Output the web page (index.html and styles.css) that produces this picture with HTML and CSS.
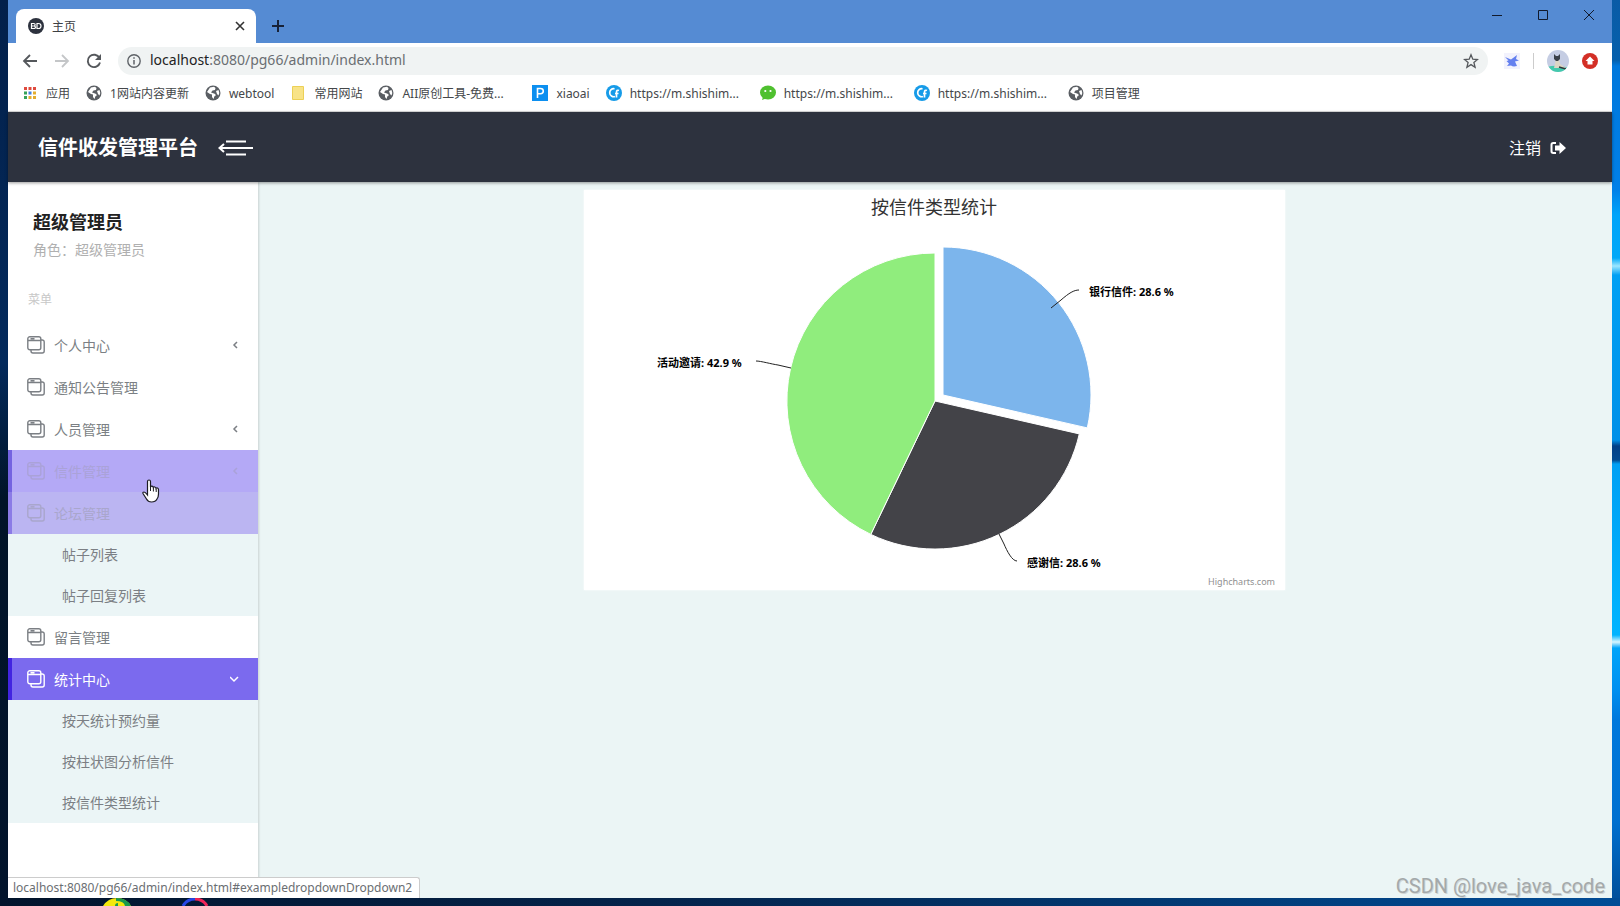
FILE: index.html
```html
<!DOCTYPE html>
<html lang="zh-CN">
<head>
<meta charset="utf-8">
<title>主页</title>
<link rel="stylesheet" href="styles.css">
</head>
<body>
<svg class="defs" aria-hidden="true">
  <symbol id="globe" viewBox="0 0 16 16"><circle cx="8" cy="8" r="7.500" fill="#5a5e63"/><path d="M2 7l3 2 2 .5V12l1.500 2c1-1.200 0-2.500 1.500-3s.5-2-1-2.500L6 7.500l1.500-2L10 5l.5-2L9 1.800 5 2.500zM11 6l2.500-1 .8 3-.8 2.500L12 9z" fill="#fff"/></symbol>
  <symbol id="window" viewBox="0 0 18 18"><g fill="none" stroke="currentColor" stroke-width="1.400"><rect x=".8" y=".8" width="13" height="13" rx="2"/><path d="M1 4.500h13M3.500 2.700h4M14 4h1.200a2 2 0 0 1 2 2v9a2 2 0 0 1-2 2H6a2 2 0 0 1-2-2v-1"/></g></symbol>
  <symbol id="cf" viewBox="0 0 16 16"><circle cx="8" cy="8" r="8" fill="#169be8"/><path d="M8.500 3.800a4 4 0 1 0 .5 7.700M13 5.500q-2.500-1-2.500 2v5M9 8.500h3.500" fill="none" stroke="#fff" stroke-width="1.700"/></symbol>
</svg>
<div class="window">
  <div class="tabstrip">
    <div class="tab">
      <svg class="i16" viewBox="0 0 16 16"><circle cx="8" cy="8" r="8" fill="#2d323e"/><path d="M3.500 5.500h2.200q1.500 0 1.500 1.200T5.700 8q1.800 0 1.800 1.300t-1.800 1.200H3.500zM3.500 8h2M9 5.500h1.500q2.500 0 2.500 2.500t-2.500 2.500H9z" fill="none" stroke="#fff" stroke-width="1.200"/></svg>
      <span class="tab-title">主页</span>
      <button class="plain" aria-label="关闭标签页"><svg class="i10" viewBox="0 0 10 10"><path d="M1 1l8 8M9 1L1 9" stroke="#333" stroke-width="1.600"/></svg></button>
    </div>
    <button class="plain newtab" aria-label="新标签页"><svg class="i12" viewBox="0 0 12 12"><path d="M6 0v12M0 6h12" stroke="#172238" stroke-width="2"/></svg></button>
    <div class="winctl">
      <button class="plain" aria-label="最小化"><svg class="i12" viewBox="0 0 12 12"><path d="M1 6.500h10" stroke="#111a2c"/></svg></button>
      <button class="plain" aria-label="最大化"><svg class="i12" viewBox="0 0 12 12"><path d="M1.500 1.500h9v9h-9z" fill="none" stroke="#111a2c"/></svg></button>
      <button class="plain" aria-label="关闭"><svg class="i12" viewBox="0 0 12 12"><path d="M1 1l10 10M11 1L1 11" stroke="#111a2c"/></svg></button>
    </div>
  </div>
  <div class="toolbar">
    <button class="plain" aria-label="后退"><svg class="i16" viewBox="0 0 16 16"><path d="M15 8H2M8 2L2 8l6 6" fill="none" stroke="#55585c" stroke-width="1.800"/></svg></button>
    <button class="plain" aria-label="前进"><svg class="i16" viewBox="0 0 16 16"><path d="M1 8h13M8 2l6 6-6 6" fill="none" stroke="#c4c6c8" stroke-width="1.800"/></svg></button>
    <button class="plain" aria-label="重新加载"><svg class="i16" viewBox="0 0 16 16"><path d="M13.500 5A6.200 6.200 0 1 0 14 9.500" fill="none" stroke="#55585c" stroke-width="1.900"/><path d="M15 1v6H9z" fill="#55585c"/></svg></button>
    <div class="omnibox">
      <svg class="i14" viewBox="0 0 14 14"><circle cx="7" cy="7" r="6.200" fill="none" stroke="#5f6368" stroke-width="1.400"/><path d="M7 6v4.500M7 3.300v1.500" stroke="#5f6368" stroke-width="1.500"/></svg>
      <span class="url"><b>localhost</b>:8080/pg66/admin/index.html</span>
      <button class="plain" aria-label="收藏"><svg class="i16" viewBox="0 0 16 16"><path d="M8 1.800l1.800 4.400 4.700.3-3.600 3 1.200 4.700L8 11.600l-4.100 2.600 1.200-4.700-3.600-3 4.700-.3z" fill="none" stroke="#55585c" stroke-width="1.300"/></svg></button>
    </div>
    <div class="extensions">
      <svg class="i16" viewBox="0 0 16 16"><path d="M0 0h16v16H0z" fill="#f2f2fd"/><path d="M1 4l6 2.500L13 2l-1 4 3 1.500-4 1L13 13q-4 1-6-.5L3 13l2-2.500L2.500 8l2-.5z" fill="#6480ef"/></svg>
      <span class="sep"></span>
      <svg class="i22" viewBox="0 0 22 22"><defs><clipPath id="av"><circle cx="11" cy="11" r="11"/></clipPath></defs><g clip-path="url(#av)"><path d="M0 0h22v22H0z" fill="#c5cde3"/><path d="M0 17q10-3 22 1v4H0z" fill="#43c9ad"/><path d="M9 9h3l1 5 6 4H7z" fill="#ddd6c5"/><path d="M7 4l2 2h2l2-2v5l-2 2H9L7 9z" fill="#3a4048"/><path d="M12 17l7 2" stroke="#33383c" stroke-width="1.500"/></g></svg>
      <svg class="i16" viewBox="0 0 16 16"><circle cx="8" cy="8" r="8" fill="#d32f26"/><path d="M8 3.500L12.500 8H10.500v3.500h-5V8H3.500z" fill="#fff"/></svg>
    </div>
  </div>
  <nav class="bookmarks">
    <a href="#"><svg class="i16" viewBox="0 0 16 16"><path d="M2 3.500h3M6.500 3.500h3M11 3.500h3" stroke="#df4b3e" stroke-width="3"/><path d="M2 8h3M2 12.500h3" stroke="#35a25a" stroke-width="3"/><path d="M6.500 8h3" stroke="#3f7fe0" stroke-width="3"/><path d="M11 8h3M6.500 12.500h3M11 12.500h3" stroke="#e3ad30" stroke-width="3"/></svg>应用</a>
    <a href="#"><svg class="i16"><use href="#globe"/></svg>1网站内容更新</a>
    <a href="#"><svg class="i16"><use href="#globe"/></svg>webtool</a>
    <a href="#"><svg class="i16" viewBox="0 0 16 16"><path d="M2.500 1.500h11v13h-11z" fill="#f8e387" stroke="#ecd056"/></svg>常用网站</a>
    <a href="#"><svg class="i16"><use href="#globe"/></svg><span class="long">AII原创工具-免费...</span></a>
    <a href="#"><svg class="i16" viewBox="0 0 16 16"><path d="M0 0h16v16H0z" fill="#0c8ff0"/><path d="M5.500 13V3.500h3q2.800 0 2.800 2.600T8.500 8.800h-3" fill="none" stroke="#fff" stroke-width="1.600"/></svg>xiaoai</a>
    <a href="#"><svg class="i16"><use href="#cf"/></svg><span class="long">https://m.shishim...</span></a>
    <a href="#"><svg class="i16" viewBox="0 0 16 16"><ellipse cx="8" cy="7.500" rx="8" ry="7" fill="#4fc02f"/><path d="M3 12l-1 3 4-1.500z" fill="#4fc02f"/><circle cx="5.300" cy="6" r="1.100" fill="#fff"/><circle cx="10.500" cy="6" r="1.100" fill="#fff"/></svg><span class="long">https://m.shishim...</span></a>
    <a href="#"><svg class="i16"><use href="#cf"/></svg><span class="long">https://m.shishim...</span></a>
    <a href="#"><svg class="i16"><use href="#globe"/></svg>项目管理</a>
  </nav>
  <header class="header">
    <h1>信件收发管理平台</h1>
    <button class="plain toggle" aria-label="切换菜单"><svg class="i36" viewBox="0 0 36 16"><path d="M8 1.500h20M1 8h34M8 14.500h20M6 4L1.500 8 6 12" fill="none" stroke="#fff" stroke-width="2"/></svg></button>
    <a class="logout" href="#">注销<svg class="i16" viewBox="0 0 16 16"><path d="M6 3H3.200Q1.500 3 1.500 4.700v6.600Q1.500 13 3.200 13H6" fill="none" stroke="#fff" stroke-width="2"/><path d="M9.500 2L16 8l-6.500 6v-3.500H5v-5h4.500z" fill="#fff"/></svg></a>
  </header>
  <div class="body">
    <aside class="sidebar">
      <div class="user"><h2>超级管理员</h2><p>角色：超级管理员</p></div>
      <span class="heading">菜单</span>
      <ul>
        <li><a class="item" href="#"><svg class="i18"><use href="#window"/></svg>个人中心<svg class="chev" viewBox="0 0 10 10"><path d="M7 2L4 5l3 3"/></svg></a></li>
        <li><a class="item" href="#"><svg class="i18"><use href="#window"/></svg>通知公告管理</a></li>
        <li><a class="item" href="#"><svg class="i18"><use href="#window"/></svg>人员管理<svg class="chev" viewBox="0 0 10 10"><path d="M7 2L4 5l3 3"/></svg></a></li>
        <li><a class="item hover" href="#"><svg class="i18"><use href="#window"/></svg>信件管理<svg class="chev" viewBox="0 0 10 10"><path d="M7 2L4 5l3 3"/></svg></a>
          <svg class="pointer" viewBox="0 0 18 24"><path d="M5.500 14V2.500Q5.500 1 7 1t1.500 1.500V8q.5-1 1.500-.8t1.300 1.300q.5-.8 1.500-.5t1.200 1.300q.6-.7 1.500-.3t1 1.500V15q0 3-1.500 5-1.500 3-5.500 3-3.500 0-5-3L1 14.500q-.5-1.500 1-1.500 1.300 0 3.500 3z" fill="#fff" stroke="#1c1c24" stroke-width="1.200"/><path d="M8.500 8v4M11.400 9v3.500M14.200 10v3" stroke="#1c1c24"/></svg></li>
        <li><a class="item fading" href="#"><svg class="i18"><use href="#window"/></svg>论坛管理</a>
          <ul class="sub"><li><a href="#">帖子列表</a></li><li><a href="#">帖子回复列表</a></li></ul></li>
        <li><a class="item" href="#"><svg class="i18"><use href="#window"/></svg>留言管理</a></li>
        <li><a class="item active" href="#"><svg class="i18"><use href="#window"/></svg>统计中心<svg class="chev" viewBox="0 0 10 10"><path d="M0 3l4 4 4-4"/></svg></a>
          <ul class="sub"><li><a href="#">按天统计预约量</a></li><li><a href="#">按柱状图分析信件</a></li><li><a href="#">按信件类型统计</a></li></ul></li>
      </ul>
    </aside>
    <main class="main">
      <svg class="chart" viewBox="0 0 701 400" role="img" aria-label="按信件类型统计">
        <text class="title" x="350" y="24" text-anchor="middle">按信件类型统计</text>
        <g stroke="#fff">
          <path d="M359 205V57A148 148 0 0 1 503.300 237.900Z" fill="#7cb5ec"/>
          <path d="M351 211L495.300 243.900A148 148 0 0 1 286.800 344.400Z" fill="#434348"/>
          <path d="M351 211L286.800 344.400A148 148 0 0 1 351 63Z" fill="#90ed7d"/>
        </g>
        <g fill="none" stroke="#222">
          <path d="M495 100C490 100 485 103 477 110L467 118"/>
          <path d="M172 171C177 171 187 174 194 175L207 178"/>
          <path d="M433 371C428 371 423 361 420 354L415 344"/>
        </g>
        <text class="label" x="505" y="106">银行信件: 28.6 %</text>
        <text class="label" x="73" y="177">活动邀请: 42.9 %</text>
        <text class="label" x="443" y="377">感谢信: 28.6 %</text>
        <text class="credit" x="691" y="395" text-anchor="end">Highcharts.com</text>
      </svg>
    </main>
  </div>
  <div class="status">localhost:8080/pg66/admin/index.html#exampledropdownDropdown2</div>
</div>
<footer class="taskbar">
  <svg class="peek" viewBox="0 0 30 8"><path d="M1 8Q6 0 15 0t14 8z" fill="#f4e80c"/><path d="M14 0q11 0 15 8h-6q-1-5-9-5z" fill="#1a9a4e"/><path d="M13 8q0-3 3-3v3z" fill="#1a9a4e"/></svg>
  <svg class="peek" viewBox="0 0 30 8"><path d="M3 8Q7 1 15 1" fill="none" stroke="#2746e6" stroke-width="3"/><path d="M15 1q8 0 12 7" fill="none" stroke="#f0245a" stroke-width="3"/></svg>
</footer>
<div class="watermark">CSDN @love_java_code</div>
</body>
</html>
```
FILE: styles.css
```css
* { box-sizing: border-box; }

body {
  margin: 0;
  min-height: 100vh;
  display: flex;
  flex-direction: column;
  position: relative;
  font-family: "Noto Sans", "Noto Sans CJK SC", sans-serif;
  font-size: 14px;
  background:
    linear-gradient(#03204a, #032a5c 40%, #011428 55%, #02142c) left / 8px 100% no-repeat,
    linear-gradient(#0a5ba6 0, #0560ac 60px, #0078dc 66px, #0080e8 190px, #00a4fa 215px, #00a8f8 258px, #9ce6ff 266px, #00a0f4 275px, #0090e8 440px, #033f86 446px, #034a90 460px, #00a0f4 464px, #00b4ff 635px, #d8f6ff 642px, #00a4fa 648px, #0090f0 690px, #0078dc 720px, #0070d0 820px, #004c96 906px) right / 8px 100% no-repeat,
    #03204a;
}

h1, h2, p, ul { margin: 0; padding: 0; }
ul { list-style: none; }
a { color: inherit; text-decoration: none; }
svg { display: block; flex: none; }

.defs { position: absolute; width: 0; height: 0; }
.plain { display: block; padding: 0; border: 0; background: none; }

.i10 { width: 10px; height: 10px; }
.i12 { width: 12px; height: 12px; }
.i14 { width: 14px; height: 14px; }
.i16 { width: 16px; height: 16px; }
.i18 { width: 18px; height: 18px; }
.i22 { width: 22px; height: 22px; }
.i36 { width: 36px; height: 16px; }

.window {
  flex: 1;
  display: flex;
  flex-direction: column;
  position: relative;
  margin: 0 8px;
  background: #fff;
}

.tabstrip {
  display: flex;
  height: 43px;
  padding: 9px 17px 0 8px;
  background: #558bd3;
}
.tab {
  display: flex;
  align-items: center;
  gap: 8px;
  width: 240px;
  padding: 0 11px 0 12px;
  border-radius: 8px 8px 0 0;
  background: #fff;
}
.tab-title { flex: 1; font-size: 12px; color: #3c4043; }
.newtab { margin-left: 16px; }
.winctl { display: flex; gap: 34px; height: 12px; margin-left: auto; }

.toolbar {
  display: flex;
  align-items: center;
  gap: 16px;
  height: 36px;
  padding: 0 14px;
}
.omnibox {
  flex: 1;
  display: flex;
  align-items: center;
  gap: 9px;
  height: 28px;
  padding: 0 9px;
  border-radius: 14px;
  background: #f0f3f3;
}
.url { flex: 1; font-size: 14px; line-height: 20px; padding-bottom: 2px; color: #6a6e72; }
.url b { font-weight: 400; color: #222; }
.extensions { display: flex; align-items: center; gap: 13px; }
.sep { width: 1px; height: 16px; background: #ccc; }

.bookmarks {
  display: flex;
  align-items: center;
  gap: 16px;
  height: 33px;
  padding: 0 14px 4px;
  border-bottom: 1px solid #ddd;
  font-size: 12px;
  color: #44474a;
  white-space: nowrap;
}
.bookmarks a { display: flex; align-items: center; gap: 8px; }
.long { width: 114px; }

.header {
  display: flex;
  align-items: center;
  height: 70px;
  padding: 2px 46px 0 30px;
  background: #2d323e;
  color: #fff;
  box-shadow: 0 1px 3px rgba(0, 0, 0, 0.4);
  z-index: 1;
}
.header h1 { font-size: 20px; line-height: 28px; }
.toggle { margin-left: 20px; }
.logout { display: flex; align-items: center; gap: 9px; margin-left: auto; font-size: 16px; line-height: 24px; }

.body { flex: 1; display: flex; }
.sidebar {
  width: 250px;
  background: #fff;
  box-shadow: 1px 0 2px rgba(0, 0, 0, 0.15);
  color: #7b7f84;
  z-index: 0;
}
.user { padding: 24px 25px 0; }
.user h2 { font-size: 18px; line-height: 32px; color: #222; }
.user p { line-height: 24px; color: #b0b0b0; }
.heading { display: block; padding: 22px 20px 0; font-size: 12px; line-height: 32px; color: #c8c8c8; }
.sidebar > ul { padding-top: 8px; }
.sidebar li { position: relative; }
.item {
  display: flex;
  align-items: center;
  gap: 9px;
  height: 42px;
  padding: 0 18px 0 15px;
  border-left: 4px solid transparent;
}
.chev {
  width: 10px;
  height: 10px;
  margin-left: auto;
  fill: none;
  stroke: currentColor;
  stroke-width: 1.5;
}
.hover { background: #b4a9f6; border-color: #7463e0; color: #aaa2d8; }
.fading { background: #bbb5f2; border-color: #8b7be6; color: #a9a6cc; }
.active { background: #7b6aee; border-color: #4224e0; color: #fff; }
.sub { background: #ebf5f6; }
.sub a { display: block; padding-left: 54px; line-height: 41px; }
.pointer { position: absolute; left: 134px; top: 29px; width: 18px; height: 24px; z-index: 1; }

.main { flex: 1; padding: 8px 26px 8px 24px; background: #ebf5f5; }
.chart { width: 100%; max-width: 701px; margin: 0 auto; background: #fff; box-shadow: 0 0 2px #fff; }
.title { font-size: 18px; fill: #333; }
.label { font-size: 11px; font-weight: 700; fill: #000; }
.credit { font-size: 9px; fill: #909090; }

.status {
  position: absolute;
  left: 0;
  bottom: 0;
  padding: 0 7px 0 5px;
  border: 1px solid #ccc;
  border-width: 1px 1px 0 0;
  border-radius: 0 3px 0 0;
  background: #fff;
  font-size: 12px;
  line-height: 20px;
  color: #6a6e72;
  z-index: 1;
}

.taskbar {
  display: flex;
  gap: 48px;
  height: 8px;
  padding-left: 102px;
  background: linear-gradient(90deg, #02142c, #04234a 40%, #004c96);
}
.peek { width: 30px; height: 8px; }

.watermark {
  position: absolute;
  right: 15px;
  bottom: 8px;
  font: 20px/24px Roboto, sans-serif;
  color: #a4a9aa;
  text-shadow: 1px 1px 0 #d0d5d5;
}
```
